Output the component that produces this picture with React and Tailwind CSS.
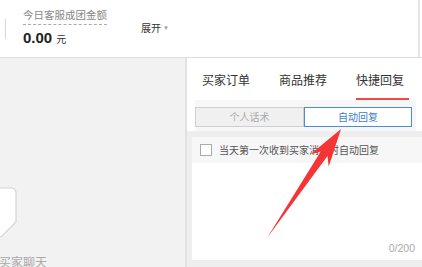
import React from "react";

const font = "font-['Liberation_Sans','Noto_Sans_CJK_SC',sans-serif]";

export default function App() {
  return (
    <div className={`relative w-[422px] h-[267px] overflow-hidden bg-white flex flex-col ${font}`}>
      {/* header */}
      <div className="h-[58px] shrink-0 flex border-b border-[#dcdcdc]">
        <div className="flex-1 flex items-center">
          <div className="w-px h-[20px] bg-[#d8d8d8] ml-[5px]" />
          <div className="ml-[17px] flex flex-col">
            <div className="text-[10.5px] leading-[14px] text-[#888] pb-[2px] border-b border-dashed border-[#aaa]">
              今日客服成团金额
            </div>
            <div className="mt-[4px] leading-[18px] text-[#222] flex items-baseline">
              <span className="text-[15px] font-bold">0.00</span>
              <span className="text-[10px] ml-[4px] text-[#333]">元</span>
            </div>
          </div>
          <div className="ml-[34px] text-[10px] text-[#333] flex items-center">
            展开
            <span className="ml-[2px] text-[6px] text-[#999]">▼</span>
          </div>
        </div>
        <div className="w-[2px] bg-[#e6e6e6]" />
        <div className="w-[2px]" />
      </div>

      {/* body */}
      <div className="flex-1 min-h-0 flex">
        {/* left chat area */}
        <div className="w-[185px] bg-[#f2f2f2] flex flex-col pt-[128px] overflow-hidden">
          <svg className="shrink-0" width="20" height="54" viewBox="0 0 20 54">
            <path d="M-5 2 H11 Q16 2 16 7 V36 L1 51 H-5 Z" fill="#fff" stroke="#d4d4d4" strokeWidth="1.2" />
          </svg>
          <div className="shrink-0 mt-[16px] -ml-[25px] text-[12px] leading-[14px] text-[#aaa] whitespace-nowrap">暂无买家聊天</div>
        </div>
        <div className="w-[2px] bg-[#e2e2e2]" />

        {/* right panel */}
        <div className="flex-1 flex flex-col bg-white">
          <div className="h-[42px] shrink-0 flex pl-[15px] gap-[29px] text-[12px] text-[#333]">
            <div className="h-full flex items-center pt-[3px]">买家订单</div>
            <div className="h-full flex items-center pt-[3px]">商品推荐</div>
            <div className="h-full flex items-center pt-[5px] pr-[5px] border-b-2 border-[#f04848]">快捷回复</div>
          </div>

          <div className="h-[31px] shrink-0 pl-[8px] pr-[6px]">
            <div className="h-full bg-[#f7f7f7] pt-[7px]">
              <div className="flex h-[20px] text-[10px]">
                <div className="w-[109px] flex items-center justify-center bg-[#f0f0f0] border border-[#cfcfcf] text-[#aaa]">个人话术</div>
                <div className="w-[108px] flex items-center justify-center bg-white border border-[#4a8fd6] text-[#3b7dc8]">自动回复</div>
              </div>
            </div>
          </div>

          <div className="flex-1 min-h-0 bg-[#eeeeee] pl-[5px] pt-[6px] pb-[7px] flex flex-col">
            <div className="flex-1 bg-white flex flex-col">
              <div className="h-[26px] bg-[#f7f7f7] flex items-center pl-[8px] gap-[7px]">
                <div className="w-[12px] h-[12px] border border-[#aaa] bg-white" />
                <span className="text-[10px] text-[#555]">当天第一次收到买家消息时自动回复</span>
              </div>
              <div className="flex-1 flex items-end justify-end pr-[7px] pb-[6px]">
                <span className="text-[10.5px] leading-[12px] text-[#aaa]">0/200</span>
              </div>
            </div>
          </div>
        </div>
      </div>

      {/* annotation arrow */}
      <svg className="absolute inset-0 pointer-events-none" width="422" height="267" viewBox="0 0 422 267">
        <polygon
          points="267,238 327.5,156.1 328.7,166.7 341,129 310.5,154.3 320.8,151.5"
          fill="#f53535"
        />
      </svg>
    </div>
  );
}
